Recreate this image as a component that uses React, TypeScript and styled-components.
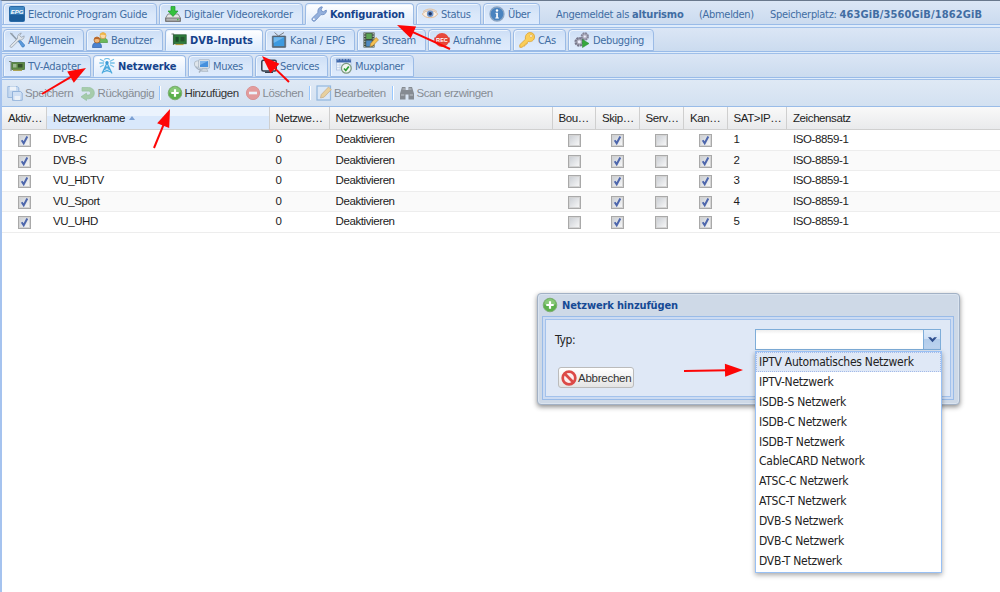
import type { ReactNode } from "react";
import styled, { createGlobalStyle, css } from "styled-components";

const ui = `"DejaVu Sans Condensed", "DejaVu Sans", sans-serif`;
const arial = `"Liberation Sans", Arial, sans-serif`;

const Icon = ({ children }: { children: ReactNode }) => (
  <IconSvg viewBox="0 0 16 16">{children}</IconSvg>
);

const EpgIcon = () => (
  <Icon>
    <rect x="0.5" y="0.5" width="15" height="15" rx="1" fill="#4289c4" stroke="#2a6aa6" />
    <rect x="1" y="8.5" width="14" height="6.5" fill="#1b5c9a" />
    <text x="8" y="8" textAnchor="middle" fontSize="6" fontWeight="bold" fontStyle="italic" fill="#fff" fontFamily="Liberation Sans, sans-serif">
      EPG
    </text>
  </Icon>
);

const SaveDiskIcon = () => (
  <Icon>
    <path d="M3 8h10l2.500 4v3.500H.5V12z" fill="#e4e4e4" stroke="#777" strokeWidth="0.8" />
    <path d="M.8 12h14.400v3.200H.8z" fill="#b5b5b5" stroke="#666" strokeWidth="0.8" />
    <circle cx="12.800" cy="13.600" r="0.8" fill="#3ac63a" />
    <path d="M6 .5h4V5h3L8 10.500 3 5h3z" fill="#35c23c" stroke="#1f9a2c" strokeWidth="0.7" />
  </Icon>
);

const WrenchIcon = () => (
  <Icon>
    <path
      d="M1.200 12.200 7 6.600C6.400 4 7.600 1.400 10.600.8l.8.2-1.200 2.400.4 1.700 1.900.6 2.700-1.600.3.800c-.4 3-3 4.300-5.600 3.700L4.200 14.800c-1.700 1.400-4.200-.8-3-2.600z"
      fill="#94b0dc"
      stroke="#7190c4"
      strokeWidth="0.9"
    />
    <circle cx="2.900" cy="13.200" r="0.9" fill="#fff" />
  </Icon>
);

const EyeIcon = () => (
  <Icon>
    <path d="M.4 8C3 3.600 13 3.600 15.600 8 13 13 3 13 .4 8z" fill="#f9eee2" stroke="#dfb48c" strokeWidth="0.9" />
    <circle cx="8.200" cy="7.700" r="3.300" fill="#6f95cc" />
    <circle cx="8.200" cy="7.700" r="1.700" fill="#22345c" />
    <path d="M1 5.600c4-3.400 10-3.400 14 0" fill="none" stroke="#e3c09c" />
  </Icon>
);

const InfoIcon = () => (
  <Icon>
    <circle cx="8" cy="8" r="7" fill="#4a83bf" stroke="#8aa5c4" strokeWidth="1.300" />
    <circle cx="8" cy="4.500" r="1.200" fill="#fff" />
    <path d="M6.500 6.800h2.400v4.800h1v1H6.300v-1h.9V7.800h-.7z" fill="#fff" />
  </Icon>
);

const ToolsIcon = () => (
  <Icon>
    <path d="M2 1.500 10 10" stroke="#8d9aa8" strokeWidth="1.600" />
    <path d="M1 1l2.500.8.4 2z" fill="#b8c2cc" stroke="#8d9aa8" strokeWidth="0.6" />
    <path d="m9.500 9 1.300-1.200 4.600 5c.8 1.400-1.200 3-2.400 2z" fill="#5d9bdd" stroke="#3a78bc" strokeWidth="0.7" />
    <path d="m1.300 13.600 7.200-7C8 4 9.600 1.400 12.300 1L10.700 3.500l1.600 1.800 2.900-1.400c0 2.800-2.400 4.700-5 4.200L3 15.200c-1.200.8-2.600-.4-1.700-1.600z" fill="#e0e5ea" stroke="#95a1ae" strokeWidth="0.800" />
  </Icon>
);

const UsersIcon = () => (
  <Icon>
    <path d="M6.500 10.500c0-3.500 1.500-4.500 4.500-4.500s4.500 1 4.500 4.500z" fill="#6cb95c" stroke="#4c983f" strokeWidth="0.7" />
    <circle cx="11" cy="3.700" r="3" fill="#fbd9a6" stroke="#d49a45" strokeWidth="0.8" />
    <path d="M8 3.200C8.300-.4 13.700-.4 14 3.200 12 3.200 11 2 8 3.200z" fill="#efb545" />
    <path d="M.5 15.500C.5 11.700 2 10.500 5 10.500s4.500 1.200 4.500 5z" fill="#4c82cf" stroke="#2d5fa8" strokeWidth="0.7" />
    <circle cx="5" cy="8" r="3" fill="#f1b678" stroke="#ab6426" strokeWidth="0.8" />
    <path d="M2 7.600C2.300 4 7.700 4 8 7.600 6 7.600 5 6.300 2 7.600z" fill="#b9672c" />
  </Icon>
);

const CardIcon = () => (
  <Icon>
    <path d="M.5 2h2v11" fill="none" stroke="#6f7f72" strokeWidth="1.200" />
    <rect x="2.800" y="2.800" width="12.400" height="9" fill="#2f7d3d" stroke="#1c5428" strokeWidth="0.7" />
    <rect x="4.500" y="4.800" width="3.200" height="5" fill="#1d4d2b" />
    <rect x="9.500" y="4.800" width="4" height="4.600" fill="#24552f" />
    <path d="M4.500 12.500h8" stroke="#b59f3f" strokeWidth="1.200" />
  </Icon>
);

const AdapterIcon = () => (
  <Icon>
    <path d="M0 3.500h2v9.500" fill="none" stroke="#7f8a84" strokeWidth="1.100" />
    <rect x="2.800" y="4.500" width="12.700" height="7" fill="#5d8a45" stroke="#3c6530" strokeWidth="0.7" />
    <rect x="4" y="6" width="3.500" height="3.500" fill="#9db893" />
    <rect x="9" y="6" width="4.500" height="3.500" fill="#34502c" />
    <path d="M4 12.300h9" stroke="#a8a04a" strokeWidth="1.300" />
  </Icon>
);

const TvIcon = () => (
  <Icon>
    <path d="M3.500 .5 7.500 4 13 .5" fill="none" stroke="#7b7f84" strokeWidth="1" />
    <rect x="1.300" y="4" width="13.400" height="11.400" rx="0.500" fill="#5b6b7a" stroke="#4a5662" strokeWidth="0.600" />
    <rect x="2.700" y="5.200" width="10.600" height="8.900" fill="#3d9ae0" />
    <path d="M2.700 5.200h10.600L2.700 11z" fill="#72b9ee" />
  </Icon>
);

const StreamIcon = () => (
  <Icon>
    <rect x="0.500" y="0.500" width="11" height="15" fill="#3c4a3f" />
    <path d="M1.800 1v14M10.200 1v14" stroke="#c3cdc3" strokeWidth="1.100" strokeDasharray="1.400 1.200" />
    <rect x="3.200" y="1.500" width="5.600" height="5.500" fill="#5aa353" />
    <rect x="3.200" y="8.500" width="5.600" height="6" fill="#4e89c2" />
    <path d="m7 14.500.8-3L13 5.600l2.500 2.200-5.600 5.900z" fill="#f5c152" stroke="#c08a30" strokeWidth="0.7" />
  </Icon>
);

const RecIcon = () => (
  <Icon>
    <circle cx="8" cy="8" r="7" fill="#e8483b" />
    <rect x="0.300" y="5.500" width="15.400" height="5" fill="#e03b30" />
    <text x="8" y="10" textAnchor="middle" fontSize="5.600" fontWeight="bold" fill="#fff" fontFamily="Liberation Sans, sans-serif">
      REC
    </text>
  </Icon>
);

const KeyIcon = () => (
  <Icon>
    <path
      d="M.8 12.700 6.500 7.200C5.700 3.800 8 .6 11 .6s4.500 1.800 4.500 4.400c0 3.200-3.200 5.300-6.300 4.500L8.400 10.200 8 12l-1.800.2-.4 1.800-1.600.2L3 15.300H.8z"
      fill="#fbce58"
      stroke="#dca63c"
      strokeWidth="0.900"
    />
    <circle cx="12" cy="4" r="1.300" fill="#fff" stroke="#d39a30" strokeWidth="0.500" />
  </Icon>
);

const GearIcon = () => (
  <Icon>
    <circle cx="10.800" cy="4.500" r="3.200" fill="#b4b4c2" stroke="#85859a" strokeWidth="1.900" strokeDasharray="1.900 0.600" />
    <circle cx="10.800" cy="4.500" r="1.100" fill="#eef" />
    <circle cx="5.300" cy="9.800" r="3.800" fill="#acacba" stroke="#77778c" strokeWidth="2.200" strokeDasharray="2.200 0.700" />
    <circle cx="5.300" cy="9.800" r="1.500" fill="#eef" />
    <path d="M8.500 7.500 15 11.500l-6.500 4z" fill="#35a83c" stroke="#2b8f36" strokeWidth="0.600" />
  </Icon>
);

const AntennaIcon = () => (
  <Icon>
    <path d="M3 15.500 8 5l5 10.500M5.200 11.500l6.500 2.500M10.800 11.500 4.300 14M6.500 8.500l4 2.500M9.500 8.500l-4 2.500" fill="none" stroke="#4ba9dd" strokeWidth="1.200" />
    <path d="M1 1.200l4.300 2.300M.3 5h4.700M1 9l4-2.300M15 1.200l-4.300 2.300M15.700 5H11M15 9l-4-2.300" fill="none" stroke="#76c0e8" strokeWidth="1.300" />
    <path d="M5.200 1.500c1.800-1.400 3.800-1.400 5.600 0" fill="none" stroke="#76c0e8" strokeWidth="1.200" />
    <circle cx="8" cy="4.800" r="1.700" fill="#3b9ad6" />
  </Icon>
);

const MuxIcon = () => (
  <Icon>
    <path d="M1 4.500C1 9 3 11.500 7 12l-2 2.500" fill="none" stroke="#a7b2bf" strokeWidth="1.400" />
    <circle cx="3.500" cy="6" r="3.200" fill="#dfe5eb" stroke="#a5b1be" strokeWidth="0.700" />
    <rect x="4.700" y="1.800" width="10.700" height="8.400" rx="0.500" fill="#e7edf3" stroke="#96a5b5" strokeWidth="0.700" />
    <rect x="6" y="3" width="8.200" height="6" fill="#4690dd" />
    <path d="M6 3h8.200L6 7z" fill="#7db5ec" />
    <path d="M8.500 10.400h4l1.500 3H7.500z" fill="#cfd7df" stroke="#a0acb9" strokeWidth="0.600" />
  </Icon>
);

const ServicesIcon = () => (
  <Icon>
    <rect x="0.800" y="2.300" width="14.400" height="10.700" rx="1.500" fill="#e3ecf7" stroke="#36404e" strokeWidth="1.500" />
    <path d="M4 14.300h8" stroke="#36404e" strokeWidth="1.400" />
  </Icon>
);

const PlannerIcon = () => (
  <Icon>
    <rect x="0.500" y="1.500" width="14.500" height="10.500" fill="#eef4fc" stroke="#a5bbdc" strokeWidth="0.700" />
    <rect x="0.500" y="0.800" width="14.500" height="3.700" fill="#3f68ac" />
    <path d="M2 .8v1.500M5 .8v1.500M8 .8v1.500M11 .8v1.500M14 .8v1.500" stroke="#fff" strokeWidth="0.700" />
    <path d="M.5 7h14M.5 9.500h14M4 4.500V12M8 4.500V12M12 4.500V12" stroke="#b6cbe8" strokeWidth="0.600" />
    <circle cx="10.300" cy="10.300" r="4.900" fill="#f2f6f0" stroke="#7f9a82" strokeWidth="1.300" />
    <path d="m8 10.500 1.800 2 3-4" fill="none" stroke="#2f9e35" strokeWidth="1.700" />
  </Icon>
);

const SaveIcon = () => (
  <Icon>
    <path d="M.8 1.500h9.500l1.500 1.500v9.500H.8z" fill="#b4cfef" stroke="#5c8dca" />
    <path d="M3 1.500h6v4H3z" fill="#fff" />
    <path d="M5.500 6.500h8l1.700 1.500v7.300H5.500z" fill="#c8dcf5" stroke="#4f83c4" />
    <path d="M7.500 11h5.500v4H7.500z" fill="#fff" />
  </Icon>
);

const UndoIcon = () => (
  <Icon>
    <path
      d="M2 2.500h6.500c3.500 0 5.800 2.300 5.800 5.500S12 13.800 8.500 13.800H6.500v1.700L1 11.800l5.500-3.700v1.900h2c1.200 0 2-.8 2-2s-.8-1.900-2-1.900H2z"
      fill="#74b566"
      stroke="#559d4f"
      strokeWidth="0.700"
    />
  </Icon>
);

const AddIcon = () => (
  <Icon>
    <circle cx="8" cy="8" r="6.800" fill="#5cb04c" stroke="#7fae74" strokeWidth="1" />
    <path d="M2.200 7.200C2.700.4 13.300.4 13.800 7.200 10 9 6 9 2.200 7.200z" fill="#86c877" />
    <path d="M6.900 4.300h2.200v2.600h2.600v2.200H9.100v2.600H6.900V9.100H4.300V6.900h2.600z" fill="#fff" />
  </Icon>
);

const DeleteIcon = () => (
  <Icon>
    <circle cx="8" cy="8" r="6.600" fill="#ec5548" stroke="#d8483e" />
    <rect x="4" y="6.700" width="8" height="2.600" fill="#fff" />
  </Icon>
);

const EditIcon = () => (
  <Icon>
    <rect x="1" y="1" width="13.500" height="14" fill="#dcebfb" stroke="#4d8bcb" strokeWidth="1.200" />
    <path d="m4.500 13 .8-3.500L12.500 2l2.800 2.600-7.200 7.500z" fill="#f6bd4c" stroke="#b97b28" strokeWidth="0.800" />
  </Icon>
);

const FindIcon = () => (
  <Icon>
    <path d="M3 2h3.500v3h3V2H13l2 6.500V14.500H9.500v-5h-3v5H1V8.500z" fill="#333" />
    <path d="M2 10h3.300M10.700 10H14M3.500 4H6M10 4h2.500" stroke="#aaa" />
  </Icon>
);

const CancelIcon = () => (
  <Icon>
    <circle cx="8" cy="8" r="6.300" fill="#fbeeee" stroke="#dc4a47" strokeWidth="2.700" />
    <path d="m3.800 3.800 8.400 8.400" stroke="#dc4a47" strokeWidth="2.700" />
  </Icon>
);

interface TabItem {
  label: string;
  width: number;
  icon: ReactNode;
  active?: boolean;
  spacing?: number;
}

const mainTabs: TabItem[] = [
  { label: "Electronic Program Guide", width: 154, icon: <EpgIcon />, spacing: -0.28 },
  { label: "Digitaler Videorekorder", width: 144, icon: <SaveDiskIcon />, spacing: -0.26 },
  { label: "Konfiguration", width: 109, icon: <WrenchIcon />, active: true, spacing: -0.15 },
  { label: "Status", width: 65, icon: <EyeIcon /> },
  { label: "Über", width: 57, icon: <InfoIcon /> },
];

const configTabs: TabItem[] = [
  { label: "Allgemein", width: 81, icon: <ToolsIcon /> },
  { label: "Benutzer", width: 77, icon: <UsersIcon /> },
  { label: "DVB-Inputs", width: 98, icon: <CardIcon />, active: true, spacing: 0 },
  { label: "Kanal / EPG", width: 90, icon: <TvIcon />, spacing: -0.15 },
  { label: "Stream", width: 69, icon: <StreamIcon /> },
  { label: "Aufnahme", width: 83, icon: <RecIcon /> },
  { label: "CAs", width: 53, icon: <KeyIcon /> },
  { label: "Debugging", width: 86, icon: <GearIcon /> },
];

const inputTabs: TabItem[] = [
  { label: "TV-Adapter", width: 88, icon: <AdapterIcon />, spacing: -0.2 },
  { label: "Netzwerke", width: 93, icon: <AntennaIcon />, active: true, spacing: -0.1 },
  { label: "Muxes", width: 65, icon: <MuxIcon /> },
  { label: "Services", width: 73, icon: <ServicesIcon /> },
  { label: "Muxplaner", width: 84, icon: <PlannerIcon /> },
];

const columns = ["Aktiv…", "Netzwerkname", "Netzwe…", "Netzwerksuche", "Bou…", "Skip…", "Serv…", "Kan…", "SAT>IP…", "Zeichensatz"];
const networks = ["DVB-C", "DVB-S", "VU_HDTV", "VU_Sport", "VU_UHD"];

const networkTypes = [
  "IPTV Automatisches Netzwerk",
  "IPTV-Netzwerk",
  "ISDB-S Netzwerk",
  "ISDB-C Netzwerk",
  "ISDB-T Netzwerk",
  "CableCARD Network",
  "ATSC-C Netzwerk",
  "ATSC-T Netzwerk",
  "DVB-S Netzwerk",
  "DVB-C Netzwerk",
  "DVB-T Netzwerk",
];

const arrows = [
  { from: [42, 94], to: [86, 68] },
  { from: [450, 49], to: [397, 25] },
  { from: [289, 82], to: [262, 56] },
  { from: [154, 148], to: [170, 109] },
  { from: [684, 371], to: [743, 370] },
];

const TabRow = ({ tabs, first, children }: { tabs: TabItem[]; first?: boolean; children?: ReactNode }) => (
  <TabBar $first={first}>
    {tabs.map((tab) => (
      <Tab key={tab.label} $active={tab.active} $width={tab.width}>
        {tab.icon}
        <TabLabel $spacing={tab.spacing}>{tab.label}</TabLabel>
      </Tab>
    ))}
    {children}
  </TabBar>
);

const CheckBox = ({ checked }: { checked?: boolean }) => (
  <CheckCell>
    <Box>
      {checked && (
        <CheckMark viewBox="0 0 11 11">
          <path d="m2.700 5.200 2 3 3.600-6.600" fill="none" stroke="#4d66ac" strokeWidth="2" />
        </CheckMark>
      )}
    </Box>
  </CheckCell>
);

const Arrow = ({ from, to }: { from: number[]; to: number[] }) => {
  const length = Math.hypot(to[0] - from[0], to[1] - from[1]);
  const angle = (Math.atan2(to[1] - from[1], to[0] - from[0]) * 180) / Math.PI;
  return (
    <g transform={`translate(${from[0]} ${from[1]}) rotate(${angle})`} fill="#fd0606">
      <rect x="0" y="-1" width={length - 15} height="2" />
      <polygon points={`${length},0 ${length - 18},-6.500 ${length - 18},6.500`} />
    </g>
  );
};

const App = () => (
  <>
    <GlobalStyle />
    <Screen>
      <TabRow tabs={mainTabs} first>
        <Status>
          <LoginInfo>
            Angemeldet als <User>alturismo</User>
          </LoginInfo>
          <Logout>(Abmelden)</Logout>
          <span>
            Speicherplatz: <Storage>463GiB/3560GiB/1862GiB</Storage>
          </span>
        </Status>
      </TabRow>
      <TabRow tabs={configTabs} />
      <TabRow tabs={inputTabs} />
      <Toolbar>
        <ToolButton $width={72.5} $disabled>
          <SaveIcon />
          Speichern
        </ToolButton>
        <ToolButton $width={79} $disabled>
          <UndoIcon />
          Rückgängig
        </ToolButton>
        <Separator $gap={6} />
        <ToolButton $width={78}>
          <AddIcon />
          Hinzufügen
        </ToolButton>
        <ToolButton $width={64.5} $disabled>
          <DeleteIcon />
          Löschen
        </ToolButton>
        <Separator $gap={5} />
        <ToolButton $width={75.5} $disabled>
          <EditIcon />
          Bearbeiten
        </ToolButton>
        <Separator $gap={5} />
        <ToolButton $width={100} $disabled>
          <FindIcon />
          Scan erzwingen
        </ToolButton>
      </Toolbar>
      <HeaderRow>
        {columns.map((column) => (
          <HeaderCell key={column} $sorted={column === "Netzwerkname"}>
            {column}
          </HeaderCell>
        ))}
      </HeaderRow>
      {networks.map((network, index) => (
        <Row key={network} $alt={index % 2 === 1}>
          <CheckBox checked />
          <Cell>{network}</Cell>
          <Cell>0</Cell>
          <Cell>Deaktivieren</Cell>
          <CheckBox />
          <CheckBox checked />
          <CheckBox />
          <CheckBox checked />
          <Cell>{index + 1}</Cell>
          <Cell>ISO-8859-1</Cell>
        </Row>
      ))}
      <Dialog>
        <DialogHeader>
          <AddIcon />
          Netzwerk hinzufügen
        </DialogHeader>
        <DialogBody>
          <Field>
            <FieldLabel>Typ:</FieldLabel>
            <Combo>
              <Trigger>
                <TriggerSvg viewBox="0 0 9 6">
                  <path d="M0 .3h2.800l1.700 1.700L6.200.3H9L4.500 5.200z" fill="#2f4f8e" />
                </TriggerSvg>
              </Trigger>
              <Options>
                {networkTypes.map((type, index) => (
                  <Option key={type} $selected={index === 0}>
                    {type}
                  </Option>
                ))}
              </Options>
            </Combo>
          </Field>
          <CancelButton>
            <CancelIcon />
            Abbrechen
          </CancelButton>
        </DialogBody>
      </Dialog>
      <Overlay viewBox="0 0 1000 592">
        {arrows.map((arrow) => (
          <Arrow key={arrow.to[0]} from={arrow.from} to={arrow.to} />
        ))}
      </Overlay>
    </Screen>
  </>
);

const GlobalStyle = createGlobalStyle`
  * {
    box-sizing: border-box;
  }
  body {
    margin: 0;
    overflow: hidden;
    background: #fff;
  }
`;

const Screen = styled.div`
  position: relative;
  width: 1000px;
  height: 592px;
  overflow: hidden;
  background: #fff;
  border-top: 1px solid #69788c;
  border-left: 2px solid #a5c3ef;
`;

const IconSvg = styled.svg`
  width: 16px;
  height: 16px;
  flex: none;
`;

const TabBar = styled.div<{ $first?: boolean }>`
  display: flex;
  align-items: flex-end;
  gap: 2px;
  height: ${({ $first }) => ($first ? 27 : 26)}px;
  padding: 0 0 2px 1px;
  background: linear-gradient(#dbe6f5, #cbdbef 23px, #99bbe8 23px, #99bbe8 24px, #dfecfb 24px);
  border-bottom: 1px solid #9fbfe9;
  white-space: nowrap;
`;

const Tab = styled.div<{ $active?: boolean; $width: number }>`
  display: flex;
  align-items: center;
  gap: 3px;
  width: ${({ $width }) => $width}px;
  flex: none;
  height: 22px;
  padding-left: 5px;
  font: 11px ${ui};
  color: #416da3;
  border: 1px solid #9bbbe6;
  border-radius: 4px 4px 0 0;
  box-shadow: inset 1px 1px 0 #eef5fd;
  background: linear-gradient(#ccdef6, #d9e7f9 50%, #deebfd);
  ${({ $active }) =>
    $active &&
    css`
      color: #15428b;
      font-weight: bold;
      border-bottom-color: #deecfd;
      background: linear-gradient(#fff, #f2f7fe 40%, #deecfd);
    `}
`;

const TabLabel = styled.span<{ $spacing?: number }>`
  letter-spacing: ${({ $spacing }) => $spacing ?? -0.35}px;
`;

const Status = styled.div`
  display: flex;
  align-items: center;
  height: 22px;
  padding-left: 14px;
  font: 11px ${ui};
  letter-spacing: -0.3px;
  color: #416da3;
`;

const LoginInfo = styled.span`
  width: 143px;
`;

const User = styled.b`
  letter-spacing: -0.15px;
`;

const Logout = styled.span`
  width: 71px;
`;

const Storage = styled.b`
  letter-spacing: 0.12px;
`;

const Toolbar = styled.div`
  display: flex;
  align-items: center;
  height: 27px;
  padding-left: 5px;
  border-bottom: 1px solid #99bce8;
  background: linear-gradient(#dfe9f5, #d3e1f1);
`;

const ToolButton = styled.div<{ $width: number; $disabled?: boolean }>`
  display: flex;
  align-items: center;
  gap: 2px;
  flex: none;
  width: ${({ $width }) => $width}px;
  font: 11.5px ${arial};
  letter-spacing: -0.4px;
  color: #333;
  white-space: nowrap;
  opacity: ${({ $disabled }) => ($disabled ? 0.5 : 1)};
`;

const Separator = styled.div<{ $gap: number }>`
  width: 2px;
  height: 14px;
  margin-right: ${({ $gap }) => $gap}px;
  border-left: 1px solid #98c8ff;
  border-right: 1px solid #fff;
`;

const gridColumns = css`
  display: grid;
  grid-template-columns: 45px 222.5px 60px 223px 43.5px 43.5px 44.5px 43.5px 59.5px 1fr;
`;

const HeaderRow = styled.div`
  ${gridColumns}
  height: 23px;
  border-bottom: 1px solid #d0d0d0;
  background: linear-gradient(#f9f9f9, #e9eaec);
`;

const HeaderCell = styled.div<{ $sorted: boolean }>`
  display: flex;
  align-items: center;
  padding-left: 6px;
  font: 11.5px ${arial};
  letter-spacing: -0.4px;
  color: #222;
  white-space: nowrap;
  border-right: 1px solid #cfcfcf;
  &:last-child {
    border-right: 0;
  }
  ${({ $sorted }) =>
    $sorted &&
    css`
      background: linear-gradient(#ebf3fd 40%, #d9e8fb 40%);
      &::after {
        content: "";
        margin-left: 4px;
        border: 3.5px solid transparent;
        border-top: 0;
        border-bottom: 4px solid #7ba0d3;
      }
    `}
`;

const Row = styled.div<{ $alt: boolean }>`
  ${gridColumns}
  height: 20.5px;
  border-bottom: 1px solid #ededed;
  background: ${({ $alt }) => ($alt ? "#fafafa" : "#fff")};
`;

const Cell = styled.div`
  padding-left: 6px;
  font: 11.5px/19px ${arial};
  letter-spacing: -0.4px;
  color: #1c1c1c;
  white-space: nowrap;
`;

const CheckCell = styled.div`
  display: flex;
  justify-content: center;
  padding-top: 4px;
`;

const Box = styled.div`
  width: 13px;
  height: 13px;
  border: 1px solid #a9a9a9;
  background: linear-gradient(135deg, #c8ccd2, #fafafa);
  box-shadow: inset 0 0 0 1px #d4d4d4;
`;

const CheckMark = styled.svg`
  display: block;
  width: 11px;
  height: 11px;
`;

const Dialog = styled.div`
  position: absolute;
  left: 535px;
  top: 292px;
  width: 423px;
  height: 112px;
  padding: 0 5px 5px 4px;
  border: 1px solid #a2b1c5;
  border-radius: 4px;
  background: #ced9e7;
  box-shadow: inset 0 0 0 1px #dae4f0, 0 2px 5px rgba(0, 0, 0, 0.45);
`;

const DialogHeader = styled.div`
  display: flex;
  align-items: center;
  gap: 4px;
  height: 22px;
  font: bold 11px ${ui};
  letter-spacing: -0.15px;
  color: #164a95;
`;

const DialogBody = styled.div`
  height: 84px;
  padding: 12px 12px 0 12px;
  border: 1px solid #99bbe8;
  box-shadow: inset 0 0 0 2px #ccdbf2, inset 0 0 0 3px #a3c2ec;
  background: #dfe8f6;
`;

const Field = styled.div`
  display: flex;
  justify-content: space-between;
  align-items: center;
`;

const FieldLabel = styled.label`
  font: 12px ${ui};
  letter-spacing: -0.3px;
  color: #222;
`;

const Combo = styled.div`
  position: relative;
  display: flex;
  justify-content: flex-end;
  width: 186px;
  height: 21px;
  border: 1px solid #7eadd9;
  background: linear-gradient(#eee, #fff 4px);
`;

const Trigger = styled.div`
  display: flex;
  align-items: center;
  justify-content: center;
  width: 17px;
  border-left: 1px solid #7eadd9;
  background: linear-gradient(#deebf9, #cddff5 50%, #b3cdeb 50%, #bcd3ef);
`;

const TriggerSvg = styled.svg`
  width: 9px;
  height: 6px;
`;

const Options = styled.div`
  position: absolute;
  z-index: 1;
  top: 21px;
  left: -1px;
  width: 187px;
  height: 222px;
  border: 1px solid #98c0f4;
  background: #fff;
  box-shadow: 0 2px 5px rgba(0, 0, 0, 0.35);
`;

const Option = styled.div<{ $selected: boolean }>`
  height: 19.9px;
  padding-left: 3px;
  font: 12px/21px ${ui};
  letter-spacing: -0.25px;
  color: #222;
  white-space: nowrap;
  ${({ $selected }) =>
    $selected &&
    css`
      background: #dfe8f6;
      outline: 1px dotted #a3bae9;
      outline-offset: -1px;
    `}
`;

const CancelButton = styled.button`
  display: flex;
  align-items: center;
  gap: 1px;
  width: 76px;
  height: 21px;
  margin: 17px 0 0 3px;
  padding: 0 0 0 2px;
  font: 11.5px ${arial};
  letter-spacing: -0.25px;
  color: #333;
  border: 1px solid #bbb;
  border-radius: 3px;
  background: linear-gradient(#fff, #f2f2f2 50%, #e4e4e4);
`;

const Overlay = styled.svg`
  position: absolute;
  left: -2px;
  top: -1px;
  width: 1000px;
  height: 592px;
  pointer-events: none;
`;

export default App;
